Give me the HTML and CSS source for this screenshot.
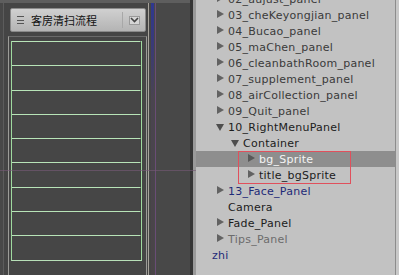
FILE: index.html
```html
<!DOCTYPE html>
<html lang="zh-CN">
<head>
    <meta charset="UTF-8">
    <title>Hierarchy</title>
    <link rel="stylesheet" href="styles.css">
</head>
<body>
    <div class="editor">
        <!-- 场景视图 -->
        <div class="scene">
            <div class="panel">
                <div class="dropdown">
                    <span class="dd-icon"></span>
                    <span class="dd-label">客房清扫流程</span>
                    <span class="dd-arrow">
                        <svg width="9" height="6" viewBox="0 0 9 6"><path d="M1 1 L4.5 4.5 L8 1" stroke="#444" stroke-width="1.6" fill="none"/></svg>
                    </span>
                </div>
                <div class="frame">
                    <div class="grid">
                        <div class="cell"></div>
                        <div class="cell"></div>
                        <div class="cell"></div>
                        <div class="cell"></div>
                        <div class="cell"></div>
                        <div class="cell"></div>
                        <div class="cell"></div>
                        <div class="cell"></div>
                        <div class="cell"></div>
                    </div>
                </div>
            </div>
            <div class="edge-light"></div>
            <div class="edge-blue"></div>
            <div class="edge-purple"></div>
            <div class="gizmo-h"></div>
        </div>

        <div class="splitter"></div>

        <!-- 层级面板 -->
        <div class="hierarchy">
            <ul class="tree">
                <li class="row d1 dim"><span class="tri"></span>02_aujust_panel</li>
                <li class="row d1 dim"><span class="tri"></span>03_cheKeyongjian_panel</li>
                <li class="row d1 dim"><span class="tri"></span>04_Bucao_panel</li>
                <li class="row d1 dim"><span class="tri"></span>05_maChen_panel</li>
                <li class="row d1 dim"><span class="tri"></span>06_cleanbathRoom_panel</li>
                <li class="row d1 dim"><span class="tri"></span>07_supplement_panel</li>
                <li class="row d1 dim"><span class="tri"></span>08_airCollection_panel</li>
                <li class="row d1 dim"><span class="tri"></span>09_Quit_panel</li>
                <li class="row d1"><span class="tri open"></span>10_RightMenuPanel</li>
                <li class="row d2"><span class="tri open"></span>Container</li>
                <li class="row d3 selected"><span class="tri"></span>bg_Sprite</li>
                <li class="row d3"><span class="tri"></span>title_bgSprite</li>
                <li class="row d1 prefab"><span class="tri"></span>13_Face_Panel</li>
                <li class="row d1">Camera</li>
                <li class="row d1"><span class="tri"></span>Fade_Panel</li>
                <li class="row d1 faded"><span class="tri"></span>Tips_Panel</li>
                <li class="row d0 prefab">zhi</li>
            </ul>
            <div class="mark"></div>
            <div class="vbar"></div>
        </div>
    </div>
</body>
</html>
```

FILE: styles.css
```css
* {
    margin: 0;
    padding: 0;
    box-sizing: border-box;
}

body {
    width: 399px;
    height: 275px;
    overflow: hidden;
    background: #474747;
    font-family: 'DejaVu Sans', sans-serif;
}

.editor {
    display: flex;
    height: 275px;
}

.scene {
    position: relative;
    width: 190px;
    height: 100%;
    background: #484848;
    border-top: 3px solid #5e5e5e;
}

.panel {
    width: 148px;
    height: 100%;
    margin-left: 3px;
    padding: 5px 4px 0 4px;
    background: #454545;
    border-left: 1px solid #5c5c5c;
}

.dropdown {
    display: flex;
    align-items: center;
    height: 24px;
    margin: 0 1px 4px 2px;
    padding: 0 5px 0 6px;
    border: 1px solid #8a8a8a;
    border-radius: 2px;
    background: linear-gradient(#d0d0d0, #b4b4b4);
}

.dd-icon {
    width: 7px;
    height: 8px;
    border: 1px solid #555;
    border-width: 1px 0;
    background: linear-gradient(#555, #555) center / 7px 1px no-repeat;
    margin-right: 6px;
}

.dd-label {
    flex: 1;
    font-family: 'Noto Sans CJK SC', sans-serif;
    font-size: 11px;
    color: #111;
    padding-left: 1px;
    height: 16px;
    line-height: 16px;
    border-right: 1px solid #a8a8a8;
    margin-right: 6px;
}

.dd-arrow {
    display: flex;
    align-items: center;
    justify-content: center;
    width: 11px;
    height: 9px;
    background: #d6d6d6;
    border: 1px solid #9a9a9a;
}

.frame {
    height: 240px;
    padding: 4px 4px 0 2px;
    border-left: 1px solid #9c9c98;
    border-right: 1px solid #9c9c98;
    border-top: 1px solid #6a6a6a;
}

.grid {
    display: grid;
    grid-template-rows: repeat(9, 24.3px);
    border-left: 1px solid #9fd99f;
    border-right: 1px solid #9fd99f;
    border-bottom: 1px solid #b8e0b8;
    background: #464646;
}

.cell {
    border-top: 1px solid #b8e4b8;
    border-right: 1px solid #3e3e3e;
}

.edge-light {
    position: absolute;
    left: 148px;
    top: 0;
    width: 1px;
    height: 100%;
    background: #a8a49c;
}

.edge-blue {
    position: absolute;
    left: 151px;
    top: 0;
    width: 3px;
    height: 100%;
    background: linear-gradient(#2e3890, #3a3a78 15%, #4a4450 35%, #4a4448);
}

.edge-purple {
    position: absolute;
    left: 155px;
    top: 0;
    width: 1px;
    height: 100%;
    background: #6a4c76;
}

.gizmo-h {
    position: absolute;
    left: 0;
    top: 167px;
    width: 196px;
    height: 1px;
    background: rgba(120, 90, 120, 0.6);
}

.splitter {
    width: 6px;
    background: linear-gradient(90deg, #363636 0 3px, #9a9a9a 3px);
}

.hierarchy {
    position: relative;
    flex: 1;
    background: #c2c2c2;
    overflow: hidden;
}

.tree {
    list-style: none;
    margin-top: -9px;
}

.row {
    display: flex;
    align-items: center;
    height: 16px;
    font-size: 11px;
    letter-spacing: 0.25px;
    color: #1c1c1c;
    white-space: nowrap;
}

.d0 { padding-left: 16px; }
.d1 { padding-left: 32px; }
.d2 { padding-left: 47px; }
.d3 { padding-left: 63px; }

.tri {
    position: relative;
}

.tri::before {
    content: "";
    position: absolute;
    left: -11px;
    top: -5px;
    border-left: 7px solid #626262;
    border-top: 4px solid transparent;
    border-bottom: 4px solid transparent;
}

.tri.open::before {
    left: -12px;
    top: -3px;
    border-top: 7px solid #4e4e4e;
    border-left: 4px solid transparent;
    border-right: 4px solid transparent;
    border-bottom: 0;
}

.dim { color: #3a3a3a; }
.faded { color: #6c6c6c; }
.prefab { color: #1e2a78; }

.selected {
    background: #8e8e8e;
    color: #f4f4f4;
}

.selected .tri::before {
    border-left-color: #585858;
}

.mark {
    position: absolute;
    left: 42px;
    top: 151px;
    width: 113px;
    height: 33px;
    border: 1px solid #e0505c;
}

.vbar {
    position: absolute;
    right: 0;
    top: 0;
    width: 4px;
    height: 100%;
    background: linear-gradient(90deg, #8c8c8c 0 1px, #c8c8c8 1px);
}
```
